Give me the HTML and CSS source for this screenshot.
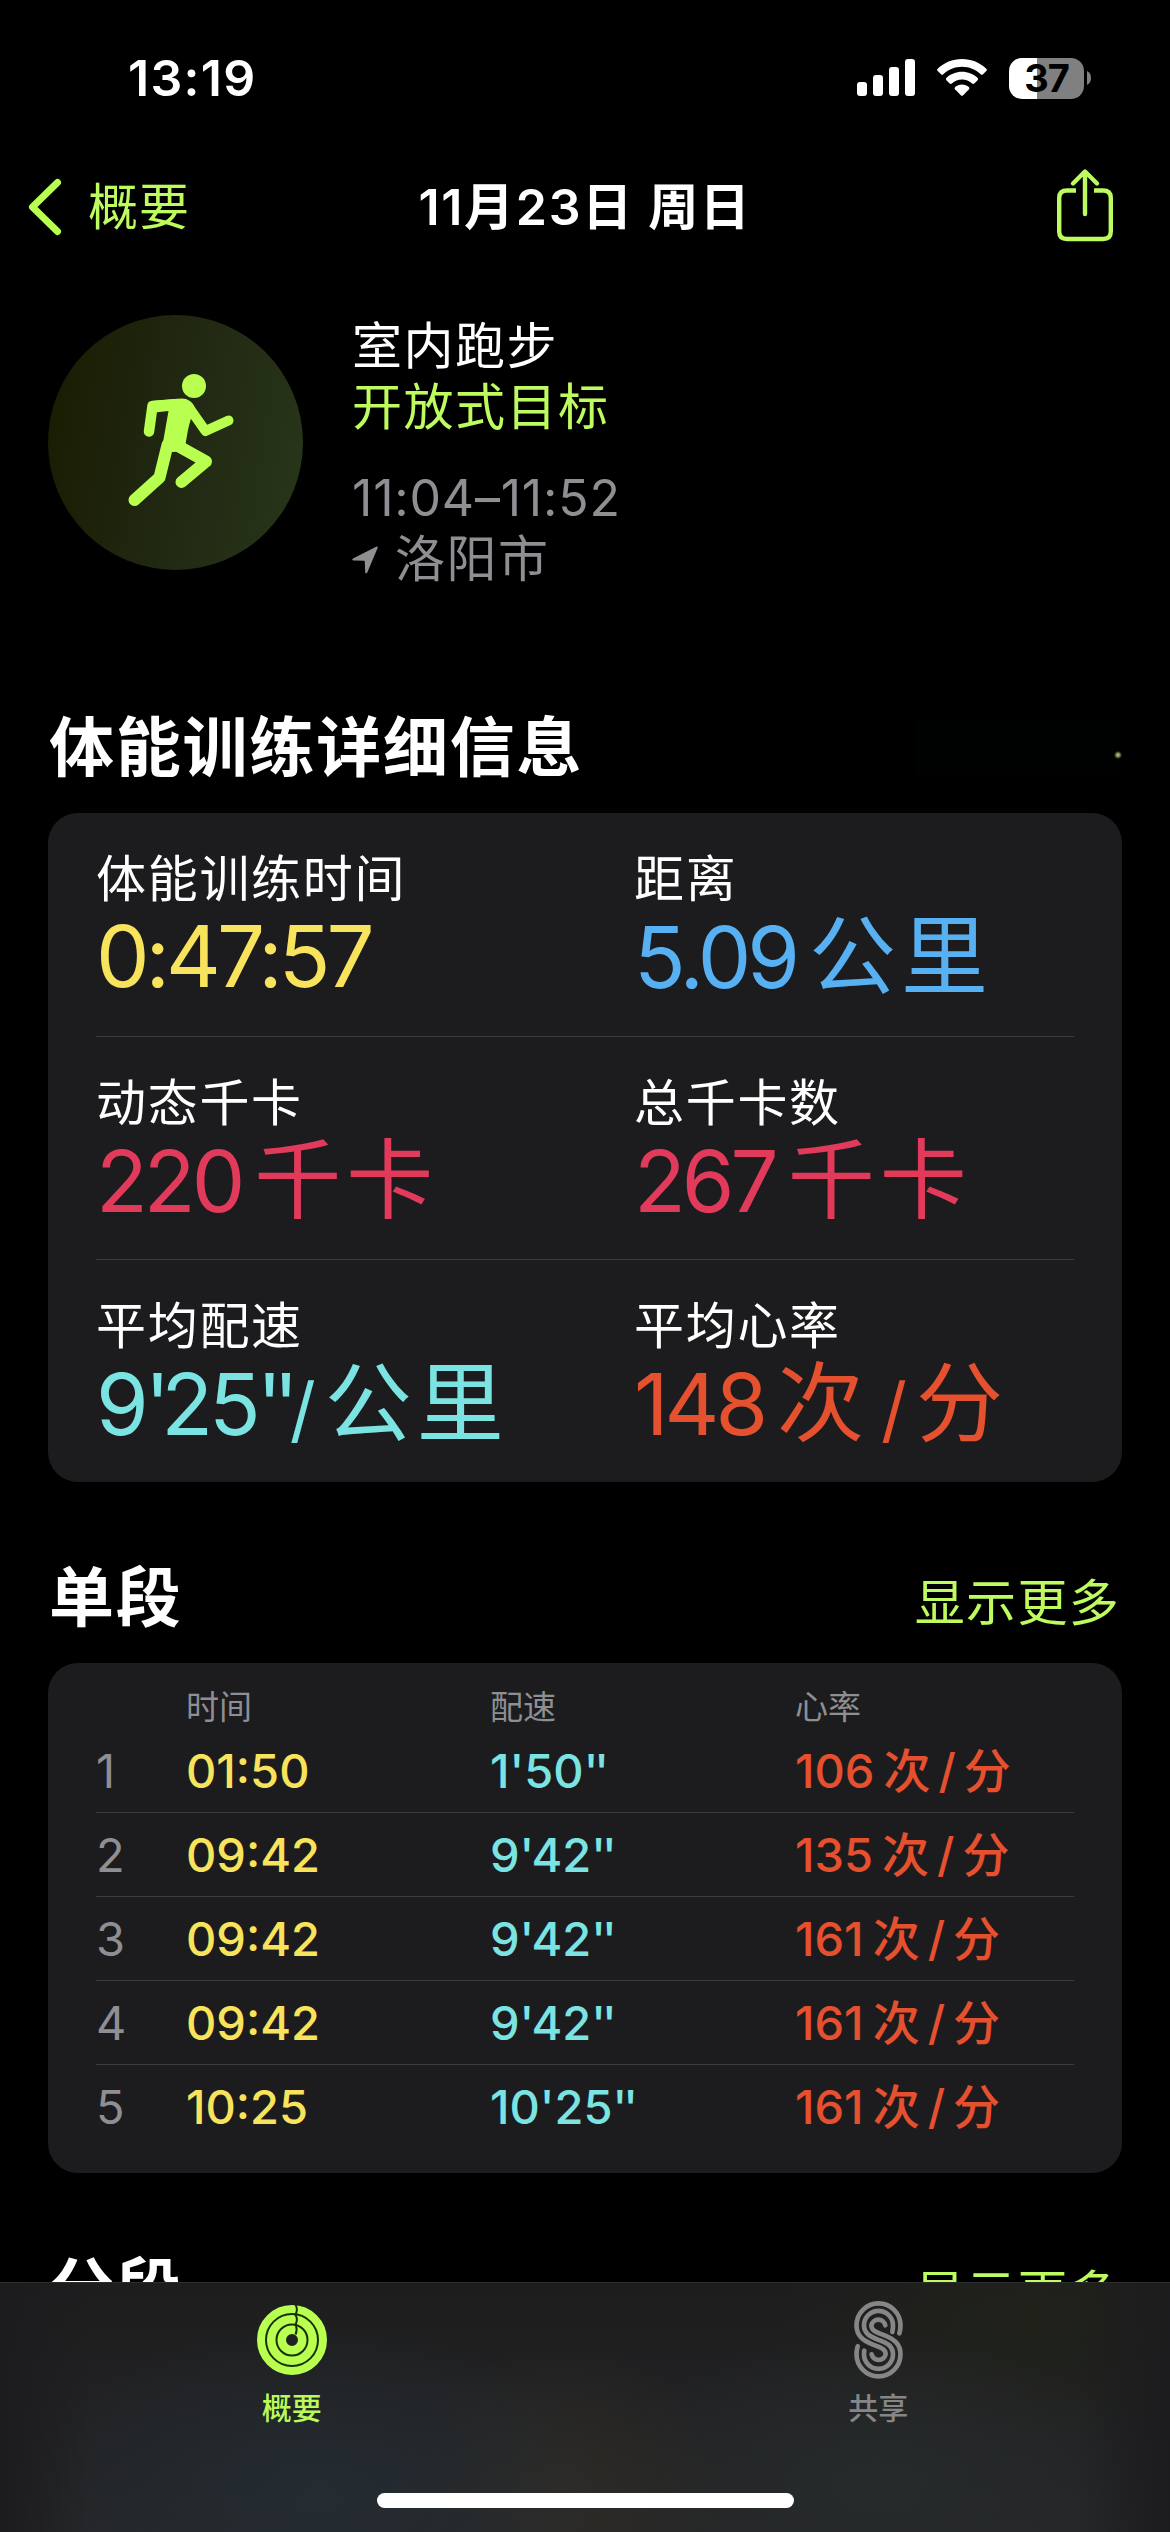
FILE: index.html
```
<!DOCTYPE html>
<html lang="zh-CN">
<head>
    <meta charset="UTF-8">
    <meta name="viewport" content="width=device-width, initial-scale=1.0">
    <title>体能训练</title>
    <link rel="stylesheet" href="styles.css">
</head>
<body>
    <!-- 状态栏 -->
    <div class="status-bar">
        <span class="time">13:19</span>
        <div class="status-icons">
            <svg class="signal" width="58" height="38" viewBox="0 0 58 38" fill="#fff">
                <rect x="0" y="23" width="10" height="14" rx="3"/>
                <rect x="16" y="16" width="10" height="21" rx="3"/>
                <rect x="32" y="8" width="10" height="29" rx="3"/>
                <rect x="48" y="0" width="10" height="37" rx="3"/>
            </svg>
            <svg class="wifi" width="50" height="38" viewBox="0 0 50 38" fill="#fff">
                <path d="M25 0C34.500 0 43 3.700 49.300 9.700Q50.400 10.900 49.300 12L46 15.200Q44.900 16.200 43.700 15.200C38.600 10.500 32 7.800 25 7.800S11.400 10.500 6.300 15.200Q5.100 16.200 4 15.200L.7 12Q-.4 10.900 .7 9.700C7 3.700 15.500 0 25 0Z"/>
                <path d="M25 12.800C31 12.800 36.500 15.100 40.700 19Q41.700 20.100 40.600 21.200L37.300 24.500Q36.200 25.400 35.100 24.500C32.300 22 28.800 20.600 25 20.600S17.700 22 14.900 24.500Q13.800 25.400 12.700 24.500L9.400 21.200Q8.300 20.100 9.300 19C13.500 15.100 19 12.800 25 12.800Z"/>
                <path d="M25 25.400C27.600 25.400 30 26.400 31.900 28Q33 29.200 32 30.300L26.200 36.200Q25 37.400 23.800 36.200L18 30.300Q17 29.200 18.100 28C20 26.400 22.400 25.400 25 25.400Z"/>
            </svg>
            <div class="battery">
                <span class="level">37</span>
                <svg width="4" height="14" viewBox="0 0 4 14"><path d="M0 0Q4 2 4 7T0 14Z" fill="#808080"/></svg>
            </div>
        </div>
    </div>

    <!-- 导航栏 -->
    <nav class="nav">
        <a class="back">
            <svg width="34" height="58" viewBox="0 0 34 58" fill="none" stroke="#b9ff50" stroke-width="7" stroke-linecap="round" stroke-linejoin="round">
                <path d="M29.500 4.500L4.500 29L29.500 53.500"/>
            </svg>
            <span>概要</span>
        </a>
        <h1>11月23日 周日</h1>
        <svg class="share" width="58" height="74" viewBox="0 0 58 74" fill="none" stroke="#bdfb5e" stroke-width="4.400" stroke-linecap="round" stroke-linejoin="round">
            <path d="M20 22.500H11Q3.200 22.500 3.200 30V63.500Q3.200 71 11 71H47Q54.800 71 54.800 63.500V30Q54.800 22.500 47 22.500H38" stroke-linecap="butt"/>
            <path d="M29 46V4M17 15.500L29 3.500L41 15.500"/>
        </svg>
    </nav>

    <main>
        <!-- 体能训练概况 -->
        <section class="workout">
            <div class="badge">
                <svg width="255" height="255" viewBox="48 315 255 255" fill="none" stroke="#b9ff50" stroke-linecap="round" stroke-linejoin="round">
                    <circle cx="194" cy="386" r="12" fill="#b9ff50" stroke="none"/>
                    <path d="M150 403.500Q151 401 155 400.700L182 398.500Q191 398.500 195 408Q190 420 188 430L185.500 444Q182 453 172 452L162 448L168.500 411L150 413Z" fill="#b9ff50" stroke="none"/>
                    <path d="M178 404L152.500 406L149 431.500" stroke-width="10.500"/>
                    <path d="M188 406L205.500 431L228.500 420.500" stroke-width="10"/>
                    <path d="M167.500 445L159.500 477.500L134.500 500" stroke-width="12"/>
                    <path d="M179 446.500L206 461.500L181.500 482" stroke-width="12"/>
                </svg>
            </div>
            <div class="info">
                <p>室内跑步</p>
                <p class="goal">开放式目标</p>
                <p class="period">11:04–11:52</p>
                <p class="place">
                    <svg width="26" height="28" viewBox="0 0 26 28"><path d="M24.600 .6Q26 .4 25.600 2L15.300 26.500Q14 28.300 13.200 26.500L12.800 15.600Q12.700 14.800 12 14.700L1.200 14.500Q-.6 13.700 1 12.400Z" fill="#8e8e93"/></svg>
                    <span>洛阳市</span>
                </p>
            </div>
        </section>

        <!-- 详细信息 -->
        <section class="details">
            <div class="title-row">
                <h2>体能训练详细信息</h2>
                <span class="faded"></span>
            </div>
            <div class="card metrics">
                <div class="metric-row">
                    <div class="metric">
                        <p>体能训练时间</p>
                        <div class="value yellow">0:47:57</div>
                    </div>
                    <div class="metric">
                        <p>距离</p>
                        <div class="value blue">5.09<span class="unit">公里</span></div>
                    </div>
                </div>
                <div class="metric-row">
                    <div class="metric">
                        <p>动态千卡</p>
                        <div class="value pink">220<span class="unit">千卡</span></div>
                    </div>
                    <div class="metric">
                        <p>总千卡数</p>
                        <div class="value pink">267<span class="unit">千卡</span></div>
                    </div>
                </div>
                <div class="metric-row">
                    <div class="metric">
                        <p>平均配速</p>
                        <div class="value cyan">9<span class="quote">'</span>25<span class="quote">''</span><span class="slash tight">/</span><span class="unit">公里</span></div>
                    </div>
                    <div class="metric">
                        <p>平均心率</p>
                        <div class="value red">148<span class="unit">次</span><span class="slash">/</span><span class="unit">分</span></div>
                    </div>
                </div>
            </div>
        </section>

        <!-- 单段 -->
        <section class="laps">
            <div class="title-row">
                <h2>单段</h2>
                <a class="more">显示更多</a>
            </div>
            <div class="card lap-card">
                <div class="lap lap-head"><span></span><span>时间</span><span>配速</span><span>心率</span></div>
                <div class="lap"><span class="num">1</span><span class="yellow">01:50</span><span class="cyan">1'50<b>''</b></span><span class="red">106<i class="per">次</i><i class="bar">/</i><i>分</i></span></div>
                <div class="lap"><span class="num">2</span><span class="yellow">09:42</span><span class="cyan">9'42<b>''</b></span><span class="red">135<i class="per">次</i><i class="bar">/</i><i>分</i></span></div>
                <div class="lap"><span class="num">3</span><span class="yellow">09:42</span><span class="cyan">9'42<b>''</b></span><span class="red">161<i class="per">次</i><i class="bar">/</i><i>分</i></span></div>
                <div class="lap"><span class="num">4</span><span class="yellow">09:42</span><span class="cyan">9'42<b>''</b></span><span class="red">161<i class="per">次</i><i class="bar">/</i><i>分</i></span></div>
                <div class="lap"><span class="num">5</span><span class="yellow">10:25</span><span class="cyan">10'25<b>''</b></span><span class="red">161<i class="per">次</i><i class="bar">/</i><i>分</i></span></div>
            </div>
        </section>

        <!-- 分段 -->
        <section class="laps">
            <div class="title-row">
                <h2>分段</h2>
                <a class="more">显示更多</a>
            </div>
        </section>
    </main>

    <!-- 底部标签栏 -->
    <footer class="tab-bar">
        <div class="tabs">
            <a class="tab active">
                <svg width="70" height="78" viewBox="-35 -39 70 78" fill="none">
                    <circle r="20.500" stroke="#b9ff50" stroke-width="29"/>
                    <g stroke="#163008" stroke-width="2">
                        <circle r="26"/>
                        <circle r="15.500"/>
                        <path d="M3.500 -35.500Q6 -31 4 -26.500Q2.500 -25.500 3.500 -25Q6 -21 4 -16.500Q3 -15.500 4 -14.500Q5.500 -10 3.500 -5.500"/>
                    </g>
                </svg>
                <span>概要</span>
            </a>
            <a class="tab">
                <svg width="49" height="78" viewBox="0 0 147 234" fill="none" stroke="#868686" stroke-width="14" stroke-linecap="round">
                    <path d="M136 97Q139.500 86 139.500 73A66 66 0 0 0 7.500 73C7.500 105 28 119 55 130C80 140 95 143 95 160A21.500 21.500 0 0 1 53 160"/>
                    <path d="M115 93Q117 84 117 73A43.500 43.500 0 0 0 30 73C30 99 50 107 73.500 116.500S117 133 117 160A43.500 43.500 0 0 1 30 160Q30 153 31 149"/>
                    <path d="M11 136Q7.500 147 7.500 160A66 66 0 0 0 139.500 160C139.500 128 119 114 92 103C67 93 52 90 52 73A21.500 21.500 0 0 1 94 73"/>
                </svg>
                <span>共享</span>
            </a>
        </div>
        <div class="home-bar"></div>
    </footer>
</body>
</html>
```
FILE: styles.css
```
*{
    box-sizing: border-box;
    margin: 0;
    padding: 0;
}
html,body{
    width: 1170px;
    height: 2532px;
    overflow: hidden;
    background-color: #000;
}
body{
    display: flex;
    flex-direction: column;
    color: #fff;
    font-family: Inter, "Noto Sans CJK SC", sans-serif;
    font-size: 50px;
    line-height: 61px;
}
svg{
    display: block;
    flex: none;
}
/* 颜色 */
.yellow{
    color: #f8e35c;
}
.blue{
    color: #56b0f2;
}
.pink{
    color: #e13a5b;
}
.cyan{
    color: #7be4e2;
}
.red{
    color: #e5502f;
}

/* 状态栏 */
.status-bar{
    flex: none;
    height: 156px;
    padding: 0 79px 0 128px;
    display: flex;
    align-items: center;
    justify-content: space-between;
}
.time{
    font-weight: 600;
    letter-spacing: 1.3px;
}
.status-icons{
    display: flex;
    align-items: center;
}
.wifi{
    margin: 0 22px;
}
.battery{
    display: flex;
    align-items: center;
    gap: 3px;
}
.level{
    width: 75px;
    height: 41px;
    border-radius: 13px;
    background: linear-gradient(to right, #fff 28px, #808080 28px);
    color: #000;
    font-size: 38px;
    font-weight: 700;
    line-height: 41px;
    text-align: center;
    letter-spacing: -1px;
}

/* 导航栏 */
.nav{
    flex: none;
    height: 102px;
    padding: 0 56px 0 28px;
    display: grid;
    grid-template-columns: 1fr auto 1fr;
    align-items: center;
}
.nav h1{
    margin-left: 28px;
    font-size: 50px;
    font-weight: 600;
    letter-spacing: 1.7px;
}
.back{
    display: flex;
    align-items: center;
    gap: 26px;
    color: #bdfb5e;
    letter-spacing: 1px;
}
.share{
    justify-self: end;
    margin-top: -5px;
}

main{
    flex: 1;
    min-height: 0;
    overflow: hidden;
    padding: 57px 48px 0;
}
.workout{
    display: flex;
    gap: 49px;
    height: 275px;
    letter-spacing: 1.5px;
}
.info{
    padding-top: 1px;
}
.badge{
    width: 255px;
    height: 255px;
    border-radius: 50%;
    background: linear-gradient(100deg, #191d02 5%, #212812 50%, #273519 95%);
}
.goal{
    color: #bdfb5e;
}
.period{
    margin-top: 30px;
    color: #8e8e93;
    letter-spacing: 0.8px;
}
.place{
    display: flex;
    align-items: center;
    gap: 17px;
    color: #8e8e93;
}

/* 标题行 */
.title-row{
    display: flex;
    justify-content: space-between;
    align-items: baseline;
    height: 80px;
    margin-bottom: 25px;
    padding-left: 1px;
}
.title-row h2{
    font-size: 65px;
    font-weight: 600;
    line-height: 80px;
    letter-spacing: 1.8px;
}
.details{
    margin-top: 118px;
}
.laps{
    margin-top: 76px;
}
.more{
    color: #bdfb5e;
    letter-spacing: 1.3px;
    margin-right: 2px;
}
.faded{
    align-self: center;
    width: 206px;
    height: 56px;
    background: radial-gradient(circle at 202px 35px, #a5b56a 0 1px, transparent 4px), #000201;
}

.card{
    background-color: #1c1c1e;
    border-radius: 30px;
    padding: 0 48px;
}
.metrics{
    height: 669px;
}
.metric-row{
    display: grid;
    grid-template-columns: 538px 1fr;
    height: 223px;
    padding-top: 36px;
}
.metric-row + .metric-row{
    border-top: 1px solid #3d3d40;
}
.metric p{
    letter-spacing: 1.7px;
}
.value{
    height: 94px;
    line-height: 94px;
    font-size: 85px;
    white-space: nowrap;
    letter-spacing: -4px;
}
.unit{
    margin-left: 13px;
    font-size: 87px;
    letter-spacing: 5px;
}
.slash{
    display: inline-block;
    font-size: 72px;
    line-height: 80px;
    margin-left: 12px;
}
.quote{
    letter-spacing: -9px;
}
.tight{
    margin-left: 0;
}

/* 单段表格 */
.lap-card{
    height: 510px;
    padding-top: 22px;
}
.lap{
    display: grid;
    grid-template-columns: 90px 304px 305px 1fr;
    height: 84px;
    padding-top: 2px;
    font-size: 47px;
    font-weight: 500;
    line-height: 82px;
}
.lap + .lap + .lap{
    border-top: 1px solid #3d3d40;
    padding-top: 1px;
}
.lap i{
    font-style: normal;
}
.lap b{
    font-weight: 500;
    letter-spacing: -4px;
}
.lap .per{
    margin-left: 9px;
}
.lap .bar{
    margin: 0 8px;
}
.lap .num{
    color: #8e8e93;
    font-weight: 400;
}
.lap-head{
    height: 43px;
    padding: 0;
    color: #8e8e93;
    font-size: 33px;
    font-weight: 400;
    line-height: 44px;
}

/* 标签栏 */
.tab-bar{
    flex: none;
    height: 250px;
    border-top: 1px solid #2d2d2f;
    display: flex;
    flex-direction: column;
    justify-content: space-between;
    align-items: center;
    padding: 18px 0 24px;
    background:
        linear-gradient(to right, #1c1c1e, transparent 8%, transparent 92%, #1c1c1e),
        radial-gradient(ellipse 300px 170px at 27% 85%, #242c32, transparent),
        radial-gradient(ellipse 170px 150px at 48% 85%, #2e2b26, transparent),
        radial-gradient(ellipse 280px 150px at 75% 80%, #272b2c, transparent),
        radial-gradient(ellipse 260px 120px at 88% 15%, #20221a, transparent),
        linear-gradient(to bottom, #1d1d1e, #252628);
}
.tabs{
    display: flex;
    align-self: stretch;
}
.tab{
    flex: 1;
    display: flex;
    flex-direction: column;
    align-items: center;
    gap: 9px;
    color: #868686;
    font-size: 30px;
    font-weight: 500;
    line-height: 40px;
}
.active{
    color: #b9fa59;
    padding-right: 3px;
}
.home-bar{
    width: 417px;
    height: 15px;
    border-radius: 8px;
    background-color: #fff;
}
```
